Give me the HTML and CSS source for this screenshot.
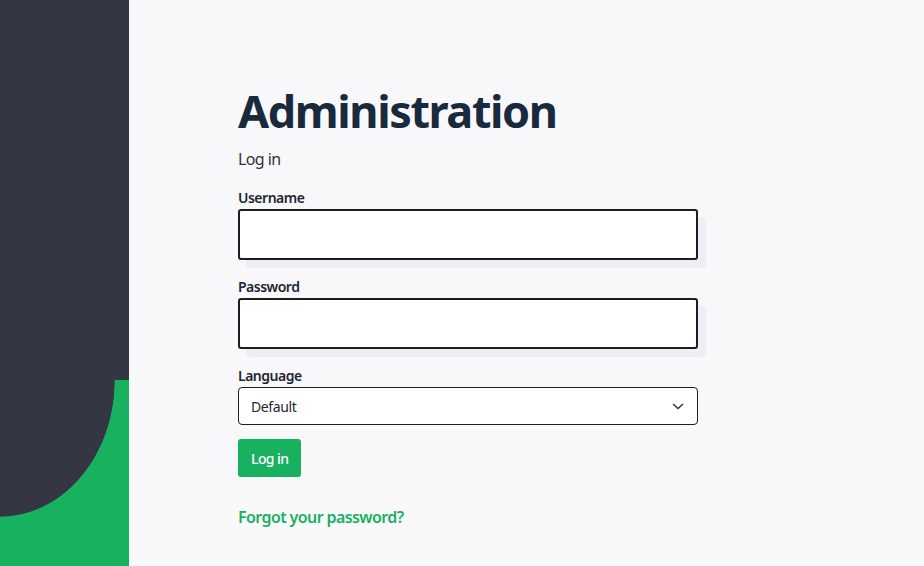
FILE: index.html
```html
<!DOCTYPE html>
<html lang="en">
<head>
<meta charset="utf-8">
<title>Log in - Administration</title>
<link rel="stylesheet" href="styles.css">
</head>
<body>
<div class="page">
  <aside class="side">
    <div class="side-top"></div>
    <div class="side-curve"></div>
  </aside>
  <main class="main">
    <h1 class="title">Administration</h1>
    <p class="subtitle">Log in</p>
    <form class="form">
      <div class="field">
        <label class="label" for="u">Username</label>
        <div class="input-wrap"><input class="input" id="u" type="text"></div>
      </div>
      <div class="field">
        <label class="label" for="p">Password</label>
        <div class="input-wrap"><input class="input" id="p" type="password"></div>
      </div>
      <div class="field field-lang">
        <label class="label" for="l">Language</label>
        <div class="select">
          <span>Default</span>
          <svg class="chev" width="14" height="14" viewBox="0 0 14 14"><path d="M2 5l5 4.5L12 5" fill="none" stroke="#333" stroke-width="1.5"/></svg>
        </div>
      </div>
      <button class="btn" type="button">Log in</button>
      <a class="forgot" href="#">Forgot your password?</a>
    </form>
  </main>
</div>
</body>
</html>
```
FILE: styles.css
```css
html, body {
  margin: 0;
  padding: 0;
  height: 100%;
}
body {
  font-family: "Noto Sans", "Open Sans", sans-serif;
  background: #f8f8fb;
  color: #2b2b2b;
}
.page {
  display: flex;
  min-height: 566px;
}
.side {
  width: 129px;
  flex: none;
  display: flex;
  flex-direction: column;
  background: #343644;
}
.side-top {
  height: 380px;
}
.side-curve {
  flex: 1;
  background: radial-gradient(ellipse 115px 137px at 0 0, #343644 99.4%, #18b15f 100%);
}
.main {
  flex: 1;
  padding: 79px 0 0 109px;
}
.title {
  margin: 0;
  font-size: 45px;
  line-height: 64px;
  font-weight: 700;
  color: #182a3b;
  letter-spacing: -1.4px;
}
.subtitle {
  margin: 5px 0 0;
  font-size: 16px;
  line-height: 22px;
  color: #333;
  letter-spacing: -0.6px;
}
.form {
  width: 460px;
  display: flex;
  flex-direction: column;
  align-items: flex-start;
  margin-top: 18px;
}
.field {
  width: 100%;
  margin-bottom: 17px;
}
.label {
  display: block;
  font-size: 14px;
  line-height: 20px;
  font-weight: 600;
  color: #1d2733;
  letter-spacing: -0.5px;
  margin-bottom: 1px;
}
.input-wrap {
  position: relative;
  width: 100%;
  height: 51px;
}
.input-wrap::before {
  content: "";
  position: absolute;
  left: 8px;
  top: 8px;
  right: -8px;
  bottom: -8px;
  background: #eeeef5;
  border-radius: 3px;
}
.input {
  position: relative;
  box-sizing: border-box;
  width: 100%;
  height: 51px;
  margin: 0;
  border: 2px solid #1d1d22;
  border-radius: 3px;
  background: #fff;
  font: inherit;
  outline: none;
}
.field-lang {
  margin-bottom: 14px;
}
.select {
  box-sizing: border-box;
  width: 100%;
  height: 38px;
  border: 1px solid #1d1d22;
  border-radius: 4px;
  background: #fff;
  display: flex;
  align-items: center;
  justify-content: space-between;
  padding: 0 12px 0 12px;
  font-size: 14px;
  letter-spacing: -0.4px;
  color: #1d2733;
}
.chev {
  display: block;
}
.btn {
  height: 38px;
  padding: 0 13px;
  border: 0;
  border-radius: 3px;
  background: #18b15f;
  color: #fff;
  font: inherit;
  font-size: 14px;
  font-weight: 500;
  letter-spacing: -0.6px;
  cursor: pointer;
}
.forgot {
  margin-top: 29px;
  font-size: 16px;
  line-height: 22px;
  font-weight: 600;
  color: #18b15f;
  letter-spacing: -0.6px;
  text-decoration: none;
}
```
